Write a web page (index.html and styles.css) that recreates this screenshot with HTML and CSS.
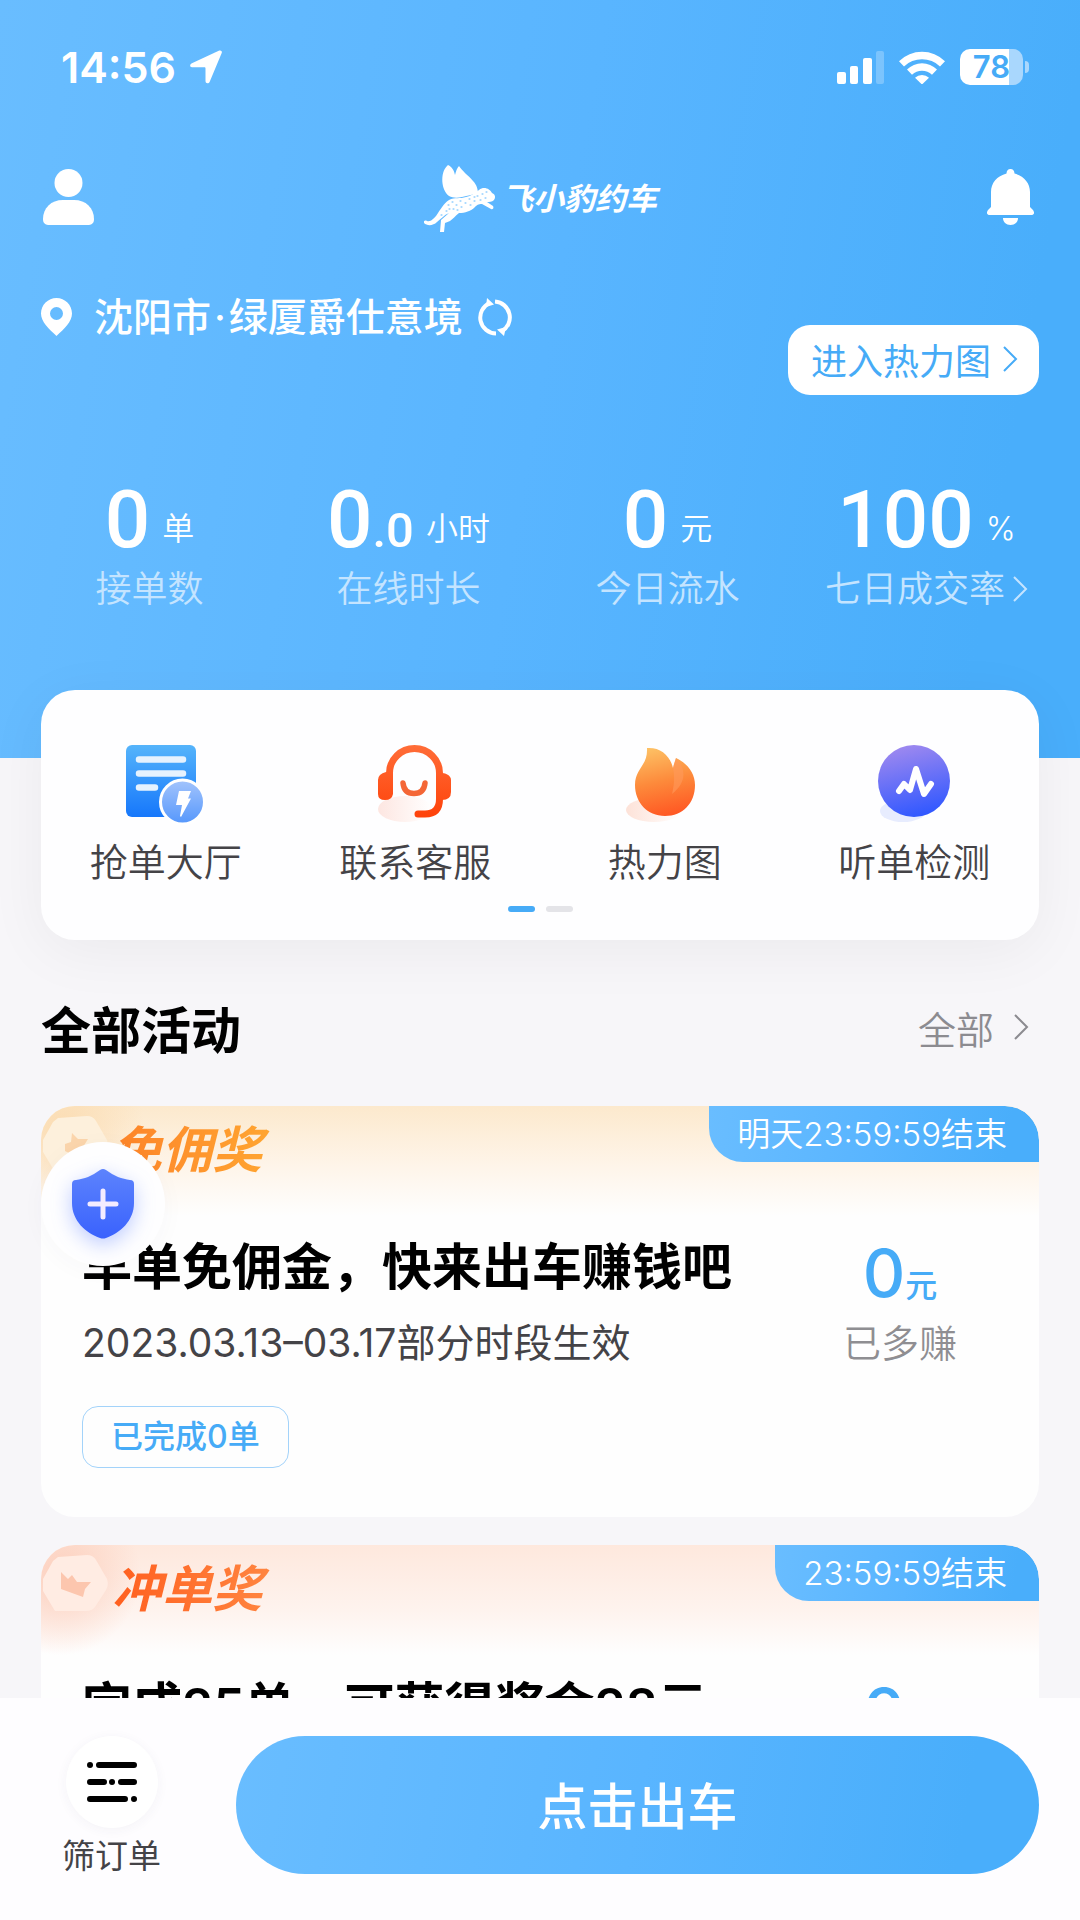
FILE: index.html
```html
<!DOCTYPE html>
<html lang="zh-CN">
<head>
<meta charset="utf-8">
<meta name="viewport" content="width=device-width, initial-scale=1">
<title>飞小豹约车</title>
<link rel="stylesheet" href="styles.css">
</head>
<body>
<div class="app">
  <div class="scroll">
    <header class="hero">
      <div class="status">
        <div class="status-left">
          <span class="clock">14:56</span>
          <svg class="icon-arrow" viewBox="0 0 32 34" aria-hidden="true"><path d="M29.300.6 1.900 13.200C-.6 14.400-.3 17.300 2 17.300H14.500C15.200 17.300 15.500 17.700 15.500 18.400V31C15.500 33.600 18.600 34 19.700 31.700L31.700 3C32.400 1.200 30.900-.1 29.300.6Z"/></svg>
        </div>
        <div class="status-right">
          <svg class="icon-signal" viewBox="0 0 47 34" aria-hidden="true"><rect y="22" width="9" height="12" rx="2"/><rect x="13" y="16" width="8" height="18" rx="2"/><rect x="26" y="8" width="9" height="26" rx="2"/><rect x="39" y="1" width="8" height="33" rx="2" opacity=".25"/></svg>
          <svg class="icon-wifi" viewBox="0 0 46 34" aria-hidden="true"><path d="M0 11.200A33 33 0 0 1 46 11.200L41 16.400A26 26 0 0 0 5 16.400Z"/><path d="M8 19.600A21 21 0 0 1 38 19.600L33 24.800A14.500 14.500 0 0 0 13 24.800Z"/><path d="M16 27.800A10 10 0 0 1 30 27.800L23 34.500Z"/></svg>
          <span class="battery"><span class="battery-box">78</span><span class="battery-nub"></span></span>
        </div>
      </div>

      <nav class="topbar">
        <button class="icon-btn" type="button" aria-label="个人中心"><svg class="icon-user" viewBox="0 0 51 56"><ellipse cx="25.500" cy="14" rx="14" ry="14"/><path d="M20 31H31C43 31 51 39 51 50C51 54 49 56 44 56H7C2 56 0 54 0 50C0 39 8 31 20 31Z"/></svg></button>
        <div class="brand">
          <svg class="icon-leopard" viewBox="0 0 72 68" aria-hidden="true">
            <path d="M25 31C17 25 16 8 23 1L24 0C28 2 30 5 31 10C32 6 33 3 35 1C38 6 44 10 49 16C53 20 54 25 54 29C48 29 44 31 38 32C33 33 29 33 25 31Z"/>
            <path d="M55 25C60 21 66 24 68 28C71 29 72 32 70 35C68 37 65 37 63 37L69 41C70 43 69 45 67 44L58 39C54 39 53 40 51 42C47 46 41 48 35 48C31 51 29 54 26 56L21 58L20 67H16L17 55L25 48C20 50 17 54 13 57C9 61 3 61 0 58C-1 56 1 55 3 56C7 57 9 54 12 51C17 44 19 39 25 35C31 32 36 34 42 32C47 31 51 28 55 25Z"/>
            <path class="spots" d="M24 40h1M28 37h1M32 40h1M29 44h1M36 36h1M37 42h1M41 38h1M45 34h1M46 40h1M50 36h1M53 31h1M56 35h1M58 29h1M62 27h1M61 33h1M22 46h1M17 50h1M50 32h1M33 45h1M25 44h1"/>
          </svg>
          <span class="brand-name">飞小豹约车</span>
        </div>
        <button class="icon-btn" type="button" aria-label="消息"><svg class="icon-bell" viewBox="0 0 47 56"><path d="M23.500 0C26 0 27.500 2 27.500 4.500C37 7 43 14 43 23V38L46 41C48 44 47 46 44 46H3C0 46-1 44 1 41L4 38V23C4 14 10 7 19.500 4.500C19.500 2 21 0 23.500 0Z"/><path d="M16 49H31C31 53 28 56 23.500 56C19 56 16 53 16 49Z"/></svg></button>
      </nav>

      <div class="place-row">
        <div class="place">
          <svg class="icon-pin" viewBox="0 0 31 38" aria-hidden="true"><path fill-rule="evenodd" d="M15.500 0C24 0 31 7 31 15.500C31 24 23 31 15.500 38C8 31 0 24 0 15.500C0 7 7 0 15.500 0ZM15.500 9A6.500 6.500 0 1 0 15.500 22A6.500 6.500 0 1 0 15.500 9Z"/></svg>
          <span class="place-name"><span>沈阳市</span><span>·</span><span>绿厦爵仕意境</span></span>
          <button class="icon-btn" type="button" aria-label="刷新定位"><svg class="icon-refresh" viewBox="0 0 37 38"><path class="ring" d="M12.500 5A16 16 0 0 0 19 35.500M18 3.500A16 16 0 0 1 24.500 33.500"/><path d="M10 0L17 6.500L9 9ZM27 38L20 31.500L29 29Z"/></svg></button>
        </div>
        <a class="heat-link" href="#heat">进入热力图<svg class="chevron" viewBox="0 0 15 26" aria-hidden="true"><path d="M1 1L13 13L1 25"/></svg></a>
      </div>

      <dl class="stats">
        <div class="stat"><dd><b>0</b><span>单</span></dd><dt>接单数</dt></div>
        <div class="stat"><dd><b>0<small>.0</small></b><span>小时</span></dd><dt>在线时长</dt></div>
        <div class="stat"><dd><b>0</b><span>元</span></dd><dt>今日流水</dt></div>
        <div class="stat"><dd><b>100</b><span>%</span></dd><dt>七日成交率<svg class="chevron" viewBox="0 0 15 26" aria-hidden="true"><path d="M1 1L13 13L1 25"/></svg></dt></div>
      </dl>
    </header>

    <section class="shortcuts" aria-label="快捷入口">
      <div class="shortcut-grid">
        <a class="shortcut" href="#grab">
          <svg viewBox="0 0 80 80" aria-hidden="true">
            <defs><linearGradient id="doc" x1="0" y1="0" x2="0" y2="1"><stop offset="0" stop-color="#55b4fb"/><stop offset="1" stop-color="#1677fb"/></linearGradient><linearGradient id="bolt" x1="0" y1="0" x2="0" y2="1"><stop offset="0" stop-color="#a3c4fc"/><stop offset="1" stop-color="#5597fc"/></linearGradient></defs>
            <rect width="70" height="72" rx="6" fill="url(#doc)"/>
            <path d="M13 14.500H57M13 28.500H57M13 42.500H29" stroke="#e6f2fe" stroke-width="6.500" stroke-linecap="round"/>
            <circle cx="56.500" cy="57" r="22" fill="url(#bolt)" stroke="#fff" stroke-width="3"/>
            <path d="M53 46H65L62 53.500H65L55 72L54 71L56 60H50Z" fill="#fff"/>
          </svg>
          <span>抢单大厅</span></a>
        <a class="shortcut" href="#service">
          <svg viewBox="0 0 80 80" aria-hidden="true">
            <defs><linearGradient id="head" gradientUnits="userSpaceOnUse" x1="0" y1="0" x2="0" y2="72"><stop offset="0" stop-color="#ff6d38"/><stop offset="1" stop-color="#fe420a"/></linearGradient><linearGradient id="headshade"><stop offset="0" stop-color="#fde6e1"/><stop offset="1" stop-color="#fff"/></linearGradient></defs>
            <ellipse cx="30" cy="64" rx="27" ry="13" fill="url(#headshade)"/>
            <path d="M14.500 34V28A25 24.500 0 0 1 64.500 28V34M64.500 28V54Q64.500 69 50 69H43" fill="none" stroke="url(#head)" stroke-width="7" stroke-linecap="round"/>
            <path d="M11 27H18V49Q17 55 10 55Q3 55 3 49V35Q3 29 11 27ZM61 27Q76 28 76 35V47Q76 55 67 55H61Z" fill="url(#head)"/>
            <path d="M28 38Q29 48.500 39 48.500Q49 48.500 50 38" fill="none" stroke="#f46636" stroke-width="5.500" stroke-linecap="round"/>
          </svg>
          <span>联系客服</span></a>
        <a class="shortcut" href="#heat">
          <svg viewBox="0 0 80 80" aria-hidden="true">
            <defs><linearGradient id="fire" x1=".3" y1="0" x2=".5" y2="1"><stop offset="0" stop-color="#fdc064"/><stop offset=".5" stop-color="#fd8a3b"/><stop offset="1" stop-color="#ff5823"/></linearGradient><linearGradient id="fireshade"><stop offset="0" stop-color="#fde2d8"/><stop offset="1" stop-color="#fff"/></linearGradient></defs>
            <ellipse cx="29" cy="65" rx="28" ry="12" fill="url(#fireshade)"/>
            <path d="M22 3C35 2 45 10 48 23C49 19 50 16 51 13C62 18 70 28 70 40C70 58 58 71 40 71C22 71 10 57 10 40C10 23 23 21 22 3Z" fill="url(#fire)"/>
            <path d="M48 23C49 19 50 16 51 13C62 25 61 38 47 49C49 40 50 32 48 23Z" fill="#ff9a5c" opacity=".6"/>
          </svg>
          <span>热力图</span></a>
        <a class="shortcut" href="#check">
          <svg viewBox="0 0 80 80" aria-hidden="true">
            <defs><linearGradient id="pulse" x1=".25" y1="0" x2=".5" y2="1"><stop offset="0" stop-color="#a18aef"/><stop offset="1" stop-color="#3158ff"/></linearGradient></defs>
            <ellipse cx="29" cy="66" rx="23" ry="11" fill="#e7ecfe"/>
            <circle cx="40" cy="36" r="36" fill="url(#pulse)"/>
            <path d="M25 46L30 39L36 45L42 24L50 49L57 39" fill="none" stroke="#fff" stroke-width="6" stroke-linecap="round" stroke-linejoin="round"/>
          </svg>
          <span>听单检测</span></a>
      </div>
      <div class="pager" aria-hidden="true"><i class="on"></i><i></i></div>
    </section>

    <main class="activities">
      <div class="section-head">
        <h1>全部活动</h1>
        <a href="#all">全部<svg class="chevron" viewBox="0 0 15 26" aria-hidden="true"><path d="M1 1L13 13L1 25"/></svg></a>
      </div>

      <article class="card gold">
        <div class="banner">
          <svg class="medal" viewBox="0 0 70 90" aria-hidden="true"><path class="gem" d="M17 12L46 10Q52 10 55 15L66 34Q68 40 65 45L54 62Q51 66 45 66H14L2 46V34L12 16Z"/><path class="crown" d="M24 38L30 36L31 27L37 33L47 33L42 41L38 52L24 45Z"/></svg>
          <h2>免佣奖</h2>
          <span class="ends">明天23:59:59结束</span>
        </div>
        <div class="card-body">
          <div class="card-main">
            <h3>早单免佣金，快来出车赚钱吧</h3>
            <p>2023.03.13–03.17部分时段生效</p>
            <span class="done">已完成0单</span>
          </div>
          <div class="earned"><strong>0<small>元</small></strong><span>已多赚</span></div>
        </div>
      </article>

      <article class="card coral">
        <div class="banner">
          <svg class="medal" viewBox="0 0 70 90" aria-hidden="true"><path class="gem" d="M17 12L46 10Q52 10 55 15L66 34Q68 40 65 45L54 62Q51 66 45 66H14L2 46V34L12 16Z"/><path class="crown" d="M20 27L27 34L31 30L36 37L50 37L44 44L42 52L20 44Z"/></svg>
          <h2>冲单奖</h2>
          <span class="ends">23:59:59结束</span>
        </div>
        <div class="card-body">
          <div class="card-main">
            <h3>完成25单，可获得奖金28元</h3>
          </div>
          <div class="earned"><strong>0<small>元</small></strong><span>已多赚</span></div>
        </div>
      </article>
      <button class="safety" type="button" aria-label="安全中心">
        <svg viewBox="0 0 62 70"><defs><linearGradient id="shield" x1="0" y1="0" x2="0" y2="1"><stop offset="0" stop-color="#5c83fd"/><stop offset="1" stop-color="#3a62fd"/></linearGradient></defs><path d="M28 1Q31-1 34 1C42 7 50 10 58 11Q62 11 62 15V34C62 52 48 64 34 69Q31 70 28 69C14 64 0 52 0 34V15Q0 11 4 11C12 10 20 7 28 1Z" fill="url(#shield)"/><path d="M31 22V48M18 35H44" stroke="#f3ecff" stroke-width="5" stroke-linecap="round"/></svg>
      </button>
    </main>
  </div>

  <footer class="dock">
    <button class="filter" type="button">
      <span class="filter-disc"><svg viewBox="0 0 50 40" aria-hidden="true"><path d="M3 3H3.010M12 3H47M3 20H17M25 20H25.010M34 20H47M3 37H38M47 37H47.010"/></svg></span>
      <span>筛订单</span>
    </button>
    <button class="go" type="button">点击出车</button>
  </footer>
</div>
</body>
</html>
```

FILE: styles.css
```css
:root {
  --gutter: 41px;
  --blue: #46abf7;
  --sky: linear-gradient(100deg, #69bdff 0%, #59b5ff 50%, #49aefb 90%);
}

* { box-sizing: border-box; margin: 0; padding: 0; }

body {
  font-family: Inter, "Noto Sans CJK SC", sans-serif;
  background: #f7f6f9;
  color: #000;
}

button { border: 0; background: none; font: inherit; color: inherit; cursor: pointer; }
a { color: inherit; text-decoration: none; }
svg { display: block; flex: none; }

.app { height: 100vh; display: flex; flex-direction: column; }
.scroll { flex: 1; min-height: 0; overflow-y: auto; scrollbar-width: none; }

/* Header */
.hero {
  background: var(--sky);
  color: #fff;
  padding: 46px 0 147px;
}
.hero svg { fill: currentColor; }

.status {
  display: flex;
  justify-content: space-between;
  align-items: center;
  height: 42px;
  padding: 0 51px 0 61px;
}
.status-left, .status-right { display: flex; align-items: center; }
.status-left { gap: 14px; }
.status-right { gap: 15px; }
.clock { font-size: 43px; font-weight: 600; line-height: 42px; }
.icon-arrow { width: 32px; height: 34px; }
.icon-signal { width: 47px; height: 34px; }
.icon-wifi { width: 46px; height: 34px; }
.battery { display: flex; align-items: center; gap: 2px; }
.battery-box {
  width: 63px;
  height: 36px;
  border-radius: 10px;
  background: linear-gradient(90deg, #fff 78%, #a9d7fd 78%);
  color: var(--blue);
  font-size: 31px;
  font-weight: 600;
  line-height: 36px;
  text-align: center;
}
.battery-nub { width: 4px; height: 12px; border-radius: 0 4px 4px 0; background: #a9d7fd; }

.topbar {
  display: flex;
  justify-content: space-between;
  align-items: center;
  height: 68px;
  margin-top: 75px;
  padding: 0 46px 0 43px;
}
.icon-user { width: 51px; height: 56px; }
.icon-bell { width: 47px; height: 56px; }
.brand { display: flex; align-items: center; gap: 6px; padding-top: 4px; }
.icon-leopard { width: 72px; height: 68px; }
.icon-leopard .spots { fill: none; stroke: #5cb7ff; stroke-width: 1; stroke-linecap: round; }
.brand-name { font-size: 31px; font-weight: 700; font-style: italic; line-height: 40px; }

.place-row {
  display: flex;
  justify-content: space-between;
  align-items: flex-end;
  margin-top: 60px;
  padding: 0 var(--gutter);
}
.place { display: flex; align-items: center; align-self: flex-start; height: 52px; }
.place-name { display: flex; gap: 3px; margin: 0 14px 0 22px; font-size: 39px; font-weight: 500; line-height: 52px; }
.icon-pin { width: 31px; height: 38px; }
.icon-refresh { width: 37px; height: 38px; }
.icon-refresh .ring { fill: none; stroke: currentColor; stroke-width: 4; }

.heat-link {
  display: flex;
  align-items: center;
  gap: 12px;
  height: 70px;
  margin-top: 34px;
  padding: 0 21px 2px 23px;
  border-radius: 22px;
  background: #fff;
  color: var(--blue);
  font-size: 36px;
}
.chevron { width: 15px; height: 26px; }
.hero .chevron, .chevron { fill: none; stroke: currentColor; stroke-width: 2; }

.stats {
  display: grid;
  grid-template-columns: repeat(4, 1fr);
  margin-top: 75px;
  padding: 0 24px 0 20px;
}
.stat { display: flex; flex-direction: column; align-items: center; gap: 13px; }
.stat dd { display: flex; align-items: flex-end; gap: 12px; height: 84px; }
.stat b { height: 84px; font-family: Roboto, sans-serif; font-size: 80px; font-weight: 500; line-height: 100px; }
.stat small { font-size: 49px; line-height: 49px; }
.stat dd span { font-size: 32px; font-weight: 350; line-height: 50px; height: 50px; }
.stat dt { display: flex; align-items: center; gap: 8px; height: 44px; font-size: 36px; font-weight: 350; line-height: 44px; color: #c4e4ff; }

/* Shortcuts */
.shortcuts {
  position: relative;
  margin: -68px var(--gutter) 0;
  padding: 55px 0 28px;
  border-radius: 34px;
  background: #fefeff;
  box-shadow: 0 12px 60px rgba(20, 10, 20, .05);
}
.shortcut-grid { display: grid; grid-template-columns: repeat(4, 1fr); }
.shortcut {
  display: flex;
  flex-direction: column;
  align-items: center;
  gap: 11px;
  font-size: 38px;
  font-weight: 350;
  line-height: 52px;
  color: #444347;
}
.shortcut svg { width: 80px; height: 80px; }
.pager { display: flex; justify-content: center; gap: 11px; margin-top: 18px; }
.pager i { width: 27px; height: 6px; border-radius: 3px; background: #e4e4e8; }
.pager .on { background: var(--blue); }

/* Activities */
.activities { position: relative; padding: 51px var(--gutter) 28px; display: flex; flex-direction: column; gap: 28px; }
.section-head { display: flex; justify-content: space-between; align-items: center; height: 72px; margin-bottom: 15px; }
.section-head h1 { font-size: 50px; font-weight: 600; }
.section-head a { display: flex; align-items: center; gap: 20px; padding-right: 10px; font-size: 38px; font-weight: 350; color: #8c8b90; }

.card { border-radius: 34px; background: #fefefe; overflow: hidden; }
.banner { display: flex; align-items: flex-start; height: 110px; }
.gold .banner { background: radial-gradient(circle at 20px 24px, #fbdcb2 0, transparent 84px), linear-gradient(#fce9cd, #fef4e8 52%, #fefefe); }
.coral .banner { background: radial-gradient(circle at 20px 30px, #fccfbd 0, transparent 80px), linear-gradient(#fee8dd, #fef3ee 60%, #fefefe); }
.medal { width: 70px; height: 90px; }
.gold .gem { fill: #fdf0dc; }
.gold .crown { fill: #fbd5ac; }
.coral .gem { fill: #ffece3; }
.coral .crown { fill: #fcc6ae; }
.banner h2 {
  margin-top: 12px;
  padding: 0 8px 0 1px;
  font-size: 50px;
  font-weight: 700;
  font-style: italic;
  line-height: 64px;
  color: transparent;
  background-clip: text;
}
.gold h2 { background-image: linear-gradient(90deg, #fd8329, #ffa531); }
.coral h2 { background-image: linear-gradient(90deg, #ff5f1f, #ff8540); }
.ends {
  height: 56px;
  margin-left: auto;
  padding: 0 32px 0 28px;
  border-radius: 0 34px 0 34px;
  background: var(--sky);
  color: #fff;
  font-size: 33px;
  font-weight: 350;
  line-height: 56px;
}

.card-body { display: flex; padding: 15px 0 49px var(--gutter); }
.card-main { flex: 1; }
.card h3 { font-size: 50px; font-weight: 600; line-height: 72px; }
.card p { margin-top: 14px; font-size: 39px; font-weight: 400; line-height: 52px; color: #444347; }
.done {
  display: inline-block;
  margin-top: 37px;
  padding: 0 28px;
  border: 1px solid #a3d3fa;
  border-radius: 16px;
  color: var(--blue);
  font-size: 32px;
  font-weight: 500;
  line-height: 60px;
}
.earned { flex: none; width: 278px; text-align: center; }
.earned strong { display: block; height: 84px; font-size: 66px; font-weight: 500; line-height: 84px; color: var(--blue); }
.earned small { font-size: 32px; line-height: 32px; }
.earned span { display: block; font-size: 38px; font-weight: 350; line-height: 56px; color: #8f8e92; }

.safety {
  position: absolute;
  left: var(--gutter);
  top: 202px;
  display: grid;
  place-items: center;
  width: 124px;
  height: 124px;
  border-radius: 50%;
  background: #fefeff;
  box-shadow: 0 4px 24px rgba(60, 60, 110, .03);
}
.safety svg { width: 62px; height: 70px; filter: drop-shadow(0 6px 10px rgba(70, 110, 255, .35)); }

/* Bottom bar */
.dock {
  display: flex;
  align-items: flex-start;
  gap: 75px;
  padding: 38px var(--gutter) 40px 62px;
  background: #fefdff;
}
.filter { display: flex; flex-direction: column; align-items: center; gap: 4px; font-size: 33px; line-height: 48px; color: #444347; }
.filter-disc {
  display: grid;
  place-items: center;
  width: 92px;
  height: 92px;
  border-radius: 50%;
  background: #fff;
  box-shadow: 0 2px 12px rgba(60, 50, 90, .05);
}
.filter-disc svg { width: 50px; height: 40px; fill: none; stroke: #000; stroke-width: 6; stroke-linecap: round; }
.go {
  flex: 1;
  height: 138px;
  padding-bottom: 4px;
  border-radius: 69px;
  background: var(--sky);
  color: #fff;
  font-size: 50px;
  font-weight: 500;
}
```
